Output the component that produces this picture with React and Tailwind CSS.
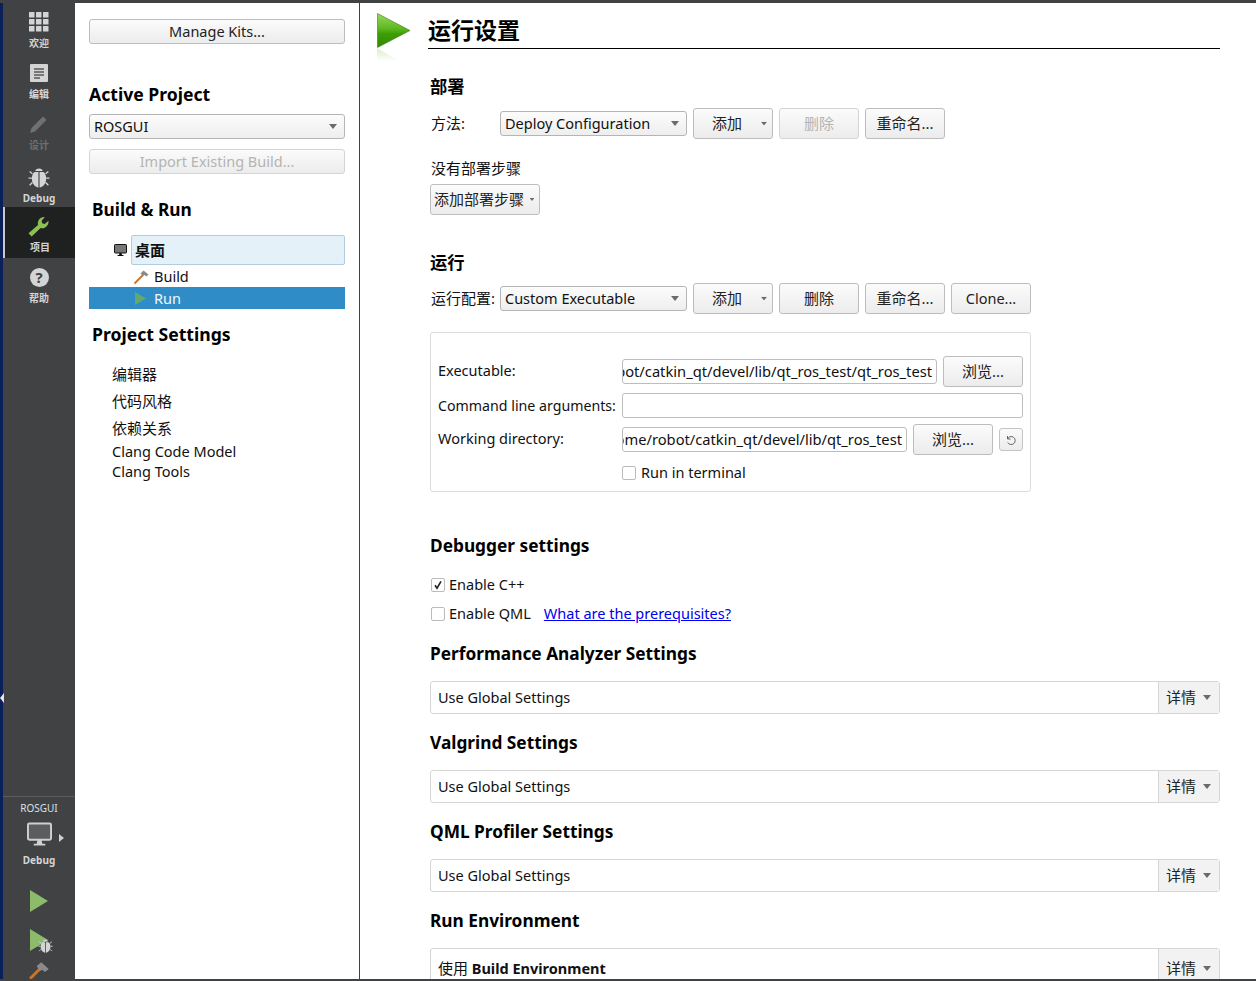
const sans = "font-['Noto_Sans','Noto_Sans_CJK_SC',sans-serif]";

function Zh({ children }) {
	return <span className="text-[15px]">{children}</span>;
}

function Arrow({ className = "" }) {
	return (
		<svg width="8" height="5" viewBox="0 0 8 5" className={className}>
			<path d="M0 0h8L4 5z" fill="#6b6b6b" />
		</svg>
	);
}

function Btn({ children, disabled, className = "" }) {
	return (
		<div
			className={`h-[31px] w-20 flex items-center justify-center rounded-[3px] border bg-linear-to-b from-[#fbfbfb] to-[#ececec] text-[14.5px] ${
				disabled ? "border-[#d4d4d4] text-[#b4b4b4]" : "border-[#bdbdbd] text-[#222]"
			} ${className}`}
		>
			{children}
		</div>
	);
}

function AddBtn() {
	return (
		<Btn className="relative pr-[12px]">
			<Zh>添加</Zh>
			<Arrow className="absolute right-[4px] top-[12px] scale-75" />
		</Btn>
	);
}

function Select({ label, className = "" }) {
	return (
		<div
			className={`h-[25px] flex items-center justify-between pl-[4px] pr-[7px] rounded-[3px] border border-[#b5b5b5] bg-linear-to-b from-[#fcfcfc] to-[#eeeeee] text-[14.5px] text-[#111] ${className}`}
		>
			<span>{label}</span>
			<Arrow />
		</div>
	);
}

function Check({ checked }) {
	return (
		<div className="h-[14px] w-[14px] flex items-center justify-center border border-[#bbb] rounded-[2px] bg-white">
			{checked && (
				<svg width="10" height="10" viewBox="0 0 10 10">
					<path d="M2 5.2l2 3L8 1.3" stroke="#222" strokeWidth="1.6" fill="none" />
				</svg>
			)}
		</div>
	);
}

function PathInput({ value, className = "" }) {
	return (
		<div
			className={`h-[25px] flex items-center justify-end overflow-hidden whitespace-nowrap pr-[4px] rounded-[3px] border border-[#bdbdbd] bg-white text-[14.7px] text-[#111] ${className}`}
		>
			{value}
		</div>
	);
}

function SettingsBar({ children, className = "" }) {
	return (
		<div className={`h-[33px] w-[790px] shrink-0 flex rounded-[3px] border border-[#d6d6d6] bg-white text-[14.5px] text-[#111] ${className}`}>
			<div className="flex-1 flex items-center pl-[7px]">{children}</div>
			<div className="w-[61px] flex items-center pl-[7px] gap-[7px] border-l border-[#d6d6d6] bg-[#f2f2f2]">
				<span className="text-[15px] text-[#222]">详情</span>
				<Arrow />
			</div>
		</div>
	);
}

function Heading({ children, className = "" }) {
	return <div className={`h-6 flex items-center text-[17.3px] font-bold leading-none text-black ${className}`}>{children}</div>;
}

function NavItem({ label, active, dim, latin, children }) {
	return (
		<div
			className={`h-[51px] flex flex-col items-center ${latin ? "pt-[8px]" : "pt-[6px]"} ${
				active ? "bg-[#1f2120] border-l-2 border-[#c8c8c8]" : ""
			} ${dim ? "text-[#6e7072]" : "text-[#d4d4d4]"}`}
		>
			<div className="h-[26px] flex items-center justify-center">{children}</div>
			<span className="mt-[1px] text-[10px] font-bold leading-[14px]">{label}</span>
		</div>
	);
}

function BugIcon({ size = 20, color = "#d4d4d4" }) {
	return (
		<svg width={size} height={size} viewBox="0 0 20 20">
			<g stroke={color} strokeWidth="1.2" fill="none">
				<path d="M4 7L1.5 5M3.500 11H0.500M4 15l-2.500 2.500M16 7l2.500-2M16.500 11H19.500M16 15l2.500 2.500" />
			</g>
			<path d="M6.500 4.500C7.500 1.500 12.500 1.500 13.500 4.500z" fill={color} />
			<path d="M9.500 5.500V19.500C6 19 3.500 15.500 3.500 11.500c0-2.500.8-5 2.500-6z" fill={color} />
			<path d="M10.500 5.500V19.500C14 19 16.500 15.500 16.500 11.500c0-2.500-.8-5-2.500-6z" fill={color} />
		</svg>
	);
}

function Hammer({ size = 16 }) {
	return (
		<svg width={size} height={size} viewBox="0 0 16 16">
			<path d="M1.500 14.500L10 6" stroke="#c8742a" strokeWidth="1.8" />
			<path d="M7.500 4.500L10.500 1.500l5 4-2 2-2-1.500-1.500 1z" fill="#8a8a8a" />
		</svg>
	);
}

function Monitor({ w = 26, h = 26, color = "#d0d0d0", inner = "#5b5d5f" }) {
	return (
		<svg width={w} height={h} viewBox="0 0 26 26">
			<rect x="1" y="1" width="24" height="17" rx="1.5" fill={inner} stroke={color} strokeWidth="2" />
			<path d="M11 18h4l1 4h3v2H7v-2h3z" fill={color} />
		</svg>
	);
}

function Sidebar() {
	return (
		<div className="w-[75px] shrink-0 flex bg-[#404244]">
			<div className="w-[3px] bg-[#0b2059]" />
			<div className="flex-1 flex flex-col">
				<NavItem label="欢迎">
					<svg width="20" height="20" viewBox="0 0 20 20" fill="#d4d4d4">
						{[0, 7, 14].flatMap((y) =>
							[0, 7, 14].map((x) => <rect key={`${x}-${y}`} x={x} y={y} width="5.500" height="5.500" rx="0.5" />)
						)}
					</svg>
				</NavItem>
				<NavItem label="编辑">
					<svg width="18" height="18" viewBox="0 0 18 18">
						<rect width="18" height="18" rx="1" fill="#d4d4d4" />
						<path d="M4 5h10M4 8h10M4 11h10M4 14h6" stroke="#55585a" strokeWidth="1.6" />
					</svg>
				</NavItem>
				<NavItem label="设计" dim>
					<svg width="20" height="20" viewBox="0 0 20 20">
						<path d="M1 19l1.500-5L14 2.500l3.500 3.500L6 17.500z" fill="#6e7072" />
					</svg>
				</NavItem>
				<NavItem label="Debug" latin>
					<BugIcon size={22} />
				</NavItem>
				<NavItem label="项目" active>
					<svg width="21" height="21" viewBox="0 0 20 20" className="-translate-x-[2px]">
						<path
							d="M0.500 16.500L9.500 8.500C8.700 4.500 11.500 0.500 16 1L13 4.500l.5 2.500 2.500.5L19.500 4.500c.5 4.500-3.300 8-7.500 7L3.500 19.500z"
							fill="#8cc152"
						/>
					</svg>
				</NavItem>
				<NavItem label="帮助">
					<div className="h-[19px] w-[19px] flex items-center justify-center rounded-full bg-[#d4d4d4] text-[15px] font-bold leading-none text-[#404244]">
						?
					</div>
				</NavItem>
				<div className="flex-1" />
				<div className="h-[183px] shrink-0 flex flex-col items-center overflow-hidden border-t border-[#5a5c5e]">
					<span className="shrink-0 mt-[4px] text-[10px] leading-[14px] text-[#d8e0e8]">ROSGUI</span>
					<div className="shrink-0 mt-[7px] h-[26px] relative">
						<Monitor w={25} />
						<svg width="5" height="8" viewBox="0 0 5 8" className="absolute left-[32px] top-[12px]">
							<path d="M0 0l5 4-5 4z" fill="#d0d0d0" />
						</svg>
					</div>
					<span className="shrink-0 mt-[5px] text-[10px] font-bold leading-[14px] text-[#d4d4d4]">Debug</span>
					<svg width="20" height="24" viewBox="0 0 20 24" className="shrink-0 mt-[22px]">
						<path d="M1 1l18 11L1 23z" fill="#8cbb6c" />
					</svg>
					<div className="shrink-0 mt-[15px] h-[24px] relative">
						<svg width="20" height="24" viewBox="0 0 20 24">
							<path d="M1 1l18 11L1 23z" fill="#8cbb6c" />
						</svg>
						<div className="absolute left-[9px] top-[10px]">
							<BugIcon size={15} />
						</div>
					</div>
					<div className="shrink-0 mt-[8px]">
						<svg width="24" height="24" viewBox="0 0 16 16">
							<path d="M2 12.500L8.500 6" stroke="#c8742a" strokeWidth="2" />
							<path d="M6.500 4L9.500 1.500l5 4.500-2.500 2-2-1.500-1.500 1z" fill="#8a8a8a" />
						</svg>
					</div>
				</div>
			</div>
		</div>
	);
}

function ProjectPanel() {
	return (
		<div className="w-[285px] shrink-0 flex flex-col border-r border-[#404244] pl-[14px] pr-[14px] pt-4 text-[14.5px] text-[#111]">
			<Btn className="!h-[25px] w-[256px]">Manage Kits...</Btn>
			<Heading className="mt-[39px] !text-[17.6px]">Active Project</Heading>
			<Select label="ROSGUI" className="mt-[7px] w-[256px]" />
			<Btn disabled className="!h-[25px] w-[256px] mt-[10px]">
				Import Existing Build...
			</Btn>
			<Heading className="mt-[24px] ml-[3px]">Build &amp; Run</Heading>
			<div className="mt-[13px] flex items-center">
				<div className="w-[42px] flex justify-end pr-[4px]">
					<Monitor w={13} h={13} color="#111" inner="#777" />
				</div>
				<div className="h-[30px] flex-1 flex items-center pl-[3px] rounded-[2px] border border-[#b3cde0] bg-[#e4f1f9] text-[15px] font-bold">
					桌面
				</div>
			</div>
			<div className="h-[22px] flex items-center pl-[44px] pt-[1px] gap-[5px]">
				<Hammer />
				Build
			</div>
			<div className="h-[22px] flex items-center pl-[46px] pt-[1px] gap-[8px] bg-[#308cc6] text-[#f2f7fb]">
				<svg width="11" height="13" viewBox="0 0 11 13">
					<path d="M0 0l11 6.500L0 13z" fill="#63a86c" />
				</svg>
				Run
			</div>
			<Heading className="mt-[14px] ml-[3px] !text-[17.6px]">Project Settings</Heading>
			<div className="mt-[14px] flex flex-col pl-[23px]">
				<div className="h-[27px] flex items-center text-[15px]">编辑器</div>
				<div className="h-[27px] flex items-center text-[15px]">代码风格</div>
				<div className="h-[27px] flex items-center text-[15px]">依赖关系</div>
				<div className="h-[20px] flex items-center">Clang Code Model</div>
				<div className="h-[20px] flex items-center">Clang Tools</div>
			</div>
		</div>
	);
}

function MainPanel() {
	return (
		<div className="flex-1 min-w-0 overflow-hidden flex flex-col pt-[10px] pl-[17px] text-[14.5px] text-[#111]">
			<div className="flex h-[36px] shrink-0">
				<div className="w-[51px] shrink-0 relative">
					<svg width="34" height="50" viewBox="0 0 34 50">
						<defs>
							<linearGradient id="playFill" x1="0" y1="0" x2="0" y2="1">
								<stop offset="0" stopColor="#9ad860" />
								<stop offset="0.45" stopColor="#5cb81e" />
								<stop offset="0.6" stopColor="#3d9c06" />
								<stop offset="1" stopColor="#2f8c00" />
							</linearGradient>
							<linearGradient id="playShade" x1="0" y1="0" x2="0" y2="1">
								<stop offset="0" stopColor="#9bd67a" stopOpacity="0.4" />
								<stop offset="1" stopColor="#9bd67a" stopOpacity="0" />
							</linearGradient>
						</defs>
						<path d="M0.500 0.500L33 17.500 0.500 34.500z" fill="url(#playFill)" stroke="#3d7a17" strokeWidth="0.6" />
						<path d="M0 35l22 13H0z" fill="url(#playShade)" />
					</svg>
				</div>
				<div className="w-[792px] h-[36px] flex items-center border-b border-black text-[23px] font-bold leading-none text-black">
					运行设置
				</div>
			</div>
			<div className="pl-[53px] flex flex-col">
				<Heading className="mt-[26px]">部署</Heading>
				<div className="mt-[9px] flex items-center gap-[6px]">
					<span className="w-[64px] pl-[1px] text-[15px]">方法:</span>
					<Select label="Deploy Configuration" className="w-[187px]" />
					<AddBtn />
					<Btn disabled>
						<Zh>删除</Zh>
					</Btn>
					<Btn>
						<Zh>重命名...</Zh>
					</Btn>
				</div>
				<div className="mt-[19px] h-[22px] flex items-center pl-[1px] text-[15px] -translate-y-px">没有部署步骤</div>
				<Btn className="mt-[4px] !w-[110px] relative !justify-start pl-[3px]">
					<Zh>添加部署步骤</Zh>
					<Arrow className="absolute right-[3px] top-[12px] scale-[0.6]" />
				</Btn>
				<Heading className="mt-[36px]">运行</Heading>
				<div className="mt-[8px] flex items-center gap-[6px]">
					<span className="w-[64px] pl-[1px] whitespace-nowrap text-[15px]">运行配置:</span>
					<Select label="Custom Executable" className="w-[187px]" />
					<AddBtn />
					<Btn>
						<Zh>删除</Zh>
					</Btn>
					<Btn>
						<Zh>重命名...</Zh>
					</Btn>
					<Btn>Clone...</Btn>
				</div>
				<div className="mt-[18px] h-[160px] w-[601px] shrink-0 flex flex-col pt-[23px] pl-[7px] pr-[7px] rounded-[3px] border border-[#dcdcdc]">
					<div className="flex items-center gap-[6px]">
						<span className="w-[178px] -mt-[2px]">Executable:</span>
						<PathInput value="/home/robot/catkin_qt/devel/lib/qt_ros_test/qt_ros_test" className="w-[315px]" />
						<Btn>
							<Zh>浏览...</Zh>
						</Btn>
					</div>
					<div className="mt-[6px] flex items-center gap-[6px]">
						<span className="w-[178px] whitespace-nowrap text-[14.2px]">Command line arguments:</span>
						<PathInput value="" className="w-[401px]" />
					</div>
					<div className="mt-[6px] flex items-center gap-[6px]">
						<span className="w-[178px] -mt-[2px]">Working directory:</span>
						<PathInput value="/home/robot/catkin_qt/devel/lib/qt_ros_test" className="w-[285px]" />
						<Btn>
							<Zh>浏览...</Zh>
						</Btn>
						<div className="h-[23px] w-[24px] flex items-center justify-center rounded-[3px] border border-[#c4c4c4] bg-linear-to-b from-[#fbfbfb] to-[#ececec]">
							<svg width="12" height="12" viewBox="0 0 12 12" fill="none" stroke="#666" strokeWidth="1">
								<path d="M2.500 2v3h3M2.500 5A4 4 0 1 1 2.700 8.500" />
							</svg>
						</div>
					</div>
					<div className="mt-[7px] ml-[184px] flex items-center gap-[5px]">
						<Check />
						Run in terminal
					</div>
				</div>
				<Heading className="mt-[42px]">Debugger settings</Heading>
				<div className="mt-[17px] h-[20px] flex items-center gap-[4px] pl-[1px]">
					<Check checked />
					Enable C++
				</div>
				<div className="mt-[9px] h-[20px] flex items-center gap-[4px] pl-[1px]">
					<Check />
					Enable QML
					<span className="ml-[9px] text-[#0000ee] underline">What are the prerequisites?</span>
				</div>
				<Heading className="mt-[18px]">Performance Analyzer Settings</Heading>
				<SettingsBar className="mt-[15px]">Use Global Settings</SettingsBar>
				<Heading className="mt-[17px]">Valgrind Settings</Heading>
				<SettingsBar className="mt-[15px]">Use Global Settings</SettingsBar>
				<Heading className="mt-[17px]">QML Profiler Settings</Heading>
				<SettingsBar className="mt-[15px]">Use Global Settings</SettingsBar>
				<Heading className="mt-[17px]">Run Environment</Heading>
				<SettingsBar className="mt-[15px] !h-[41px]">
					<span>
						<Zh>使用</Zh> <b>Build Environment</b>
					</span>
				</SettingsBar>
			</div>
		</div>
	);
}

export default function App() {
	return (
		<div className={`relative h-[981px] w-[1256px] flex flex-col overflow-hidden bg-white ${sans}`}>
			<div className="h-[3px] shrink-0 bg-[#404244]" />
			<div className="flex-1 min-h-0 flex">
				<Sidebar />
				<ProjectPanel />
				<MainPanel />
			</div>
			<div className="h-[2px] shrink-0 bg-[#404244]" />
			<svg width="4" height="10" viewBox="0 0 4 10" className="absolute left-0 top-[693px]">
				<path d="M4 0L0 5l4 5z" fill="#e6e6e6" />
			</svg>
		</div>
	);
}
